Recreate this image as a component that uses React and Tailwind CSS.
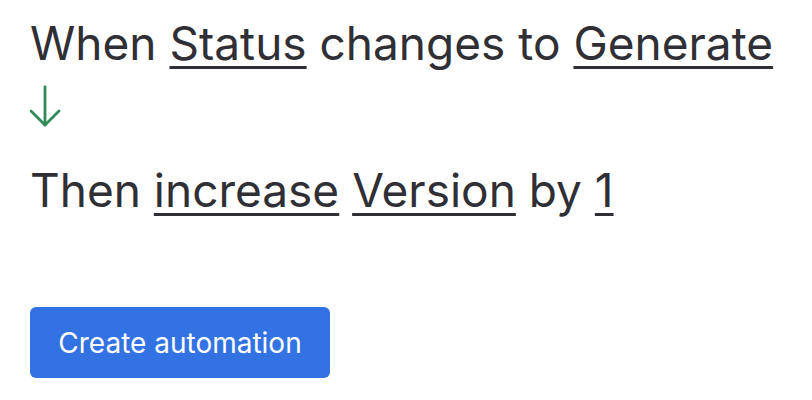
import React from "react";

function Token({ children }) {
  return (
    <span className="underline decoration-[#2f2f35] decoration-[3px] underline-offset-[6px] [text-decoration-skip-ink:none]">
      {children}
    </span>
  );
}

export default function App() {
  return (
    <div className="flex h-[400px] w-[812px] flex-col bg-white px-[30px] font-['Inter',sans-serif] text-[#2f2f35]">
      {/* Trigger */}
      <p className="mt-[13px] whitespace-nowrap text-[46px] leading-[60px]">
        When <Token>Status</Token> changes to <Token>Generate</Token>
      </p>

      {/* Arrow */}
      <div className="mt-[11px]">
        <svg width="32" height="44" viewBox="0 0 32 44" fill="none" stroke="#2f8a55" strokeWidth="2.8" strokeLinecap="round" strokeLinejoin="round">
          <path d="M15 3v38" />
          <path d="M1 27l14 14 14-14" />
        </svg>
      </div>

      {/* Action */}
      <p className="mt-[32px] whitespace-nowrap text-[46px] leading-[60px]">
        Then <Token>increase</Token> <Token>Version</Token> by <Token>1</Token>
      </p>

      <div className="mt-[87px]">
        <button
          type="button"
          className="flex h-[71px] w-[300px] items-center justify-center rounded-[6px] bg-[#3372e3] text-[28px] text-white"
        >
          Create automation
        </button>
      </div>
    </div>
  );
}
